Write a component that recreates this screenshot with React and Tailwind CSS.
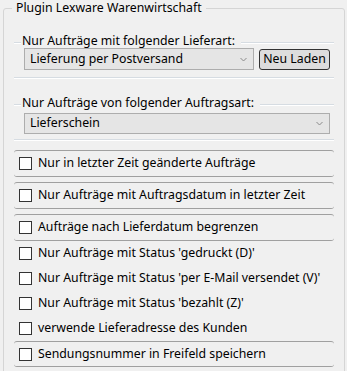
import React from "react";

function Chevron() {
  return (
    <svg width="7" height="5" viewBox="0 0 7 5" className="shrink-0">
      <path d="M0.5 1 L3.5 4 L6.5 1" fill="none" stroke="#8a8a8a" strokeWidth="1" />
    </svg>
  );
}

function Etched({ className = "" }) {
  return (
    <div className={"flex flex-col " + className}>
      <div className="h-[1px] bg-[#d6dce2]" />
      <div className="h-[1px] bg-white" />
    </div>
  );
}

function Header({ text, className = "" }) {
  return (
    <div className={"flex h-[14px] items-start " + className}>
      <Etched className="mt-[8px] w-[7px]" />
      <span className="ml-[1px] mr-[6px] whitespace-nowrap leading-[14px]">{text}</span>
      <Etched className="mt-[8px] flex-1" />
    </div>
  );
}

function Combo({ text, className = "" }) {
  return (
    <div className={"flex items-center justify-between border border-[#adadad] bg-[#e5e5e5] pl-[5px] pr-[6px] " + className}>
      <span className="whitespace-nowrap leading-none">{text}</span>
      <Chevron />
    </div>
  );
}

function Check({ label }) {
  return (
    <div className="flex items-center gap-[6px] pl-[5px]">
      <div className="h-[13px] w-[13px] shrink-0 border border-[#333333] bg-white" />
      <span className="whitespace-nowrap leading-none">{label}</span>
    </div>
  );
}

function CheckGroup({ label, className = "" }) {
  return (
    <div className={"flex items-center rounded-[3px] border-y border-[#a0a0a0] " + className}>
      <Check label={label} />
    </div>
  );
}

export default function App() {
  return (
    <div
      className="relative h-[371px] w-[347px] overflow-hidden bg-[#f0f0f0] text-[12.3px] text-black"
      style={{ fontFamily: '"Noto Sans", "Open Sans", sans-serif' }}
    >
      <fieldset className="ml-[3px] h-[400px] w-[342px] rounded-[3px] border border-[#d5d5d5]">
        <legend className="ml-[8px] px-[4px] leading-[16px]">Plugin Lexware Warenwirtschaft</legend>
        <div className="flex flex-col px-[10px]">
          <Header text="Nur Aufträge mit folgender Lieferart:" className="mt-[18px]" />
          <div className="ml-[10px] flex items-start">
            <Combo text="Lieferung per Postversand" className="h-[22px] w-[230px]" />
            <button className="ml-[5px] mt-[1px] flex h-[21px] w-[71px] items-center justify-center rounded-[3px] border border-[#333333] bg-[#dddddd] leading-none">
              Neu Laden
            </button>
          </div>
          <Etched className="mt-[7px]" />
          <Header text="Nur Aufträge von folgender Auftragsart:" className="mt-[17px]" />
          <Combo text="Lieferschein" className="ml-[10px] mt-[3px] h-[21px] w-[306px]" />
          <Etched className="mt-[5px]" />
          <CheckGroup label="Nur in letzter Zeit geänderte Aufträge" className="mt-[9px] h-[27px]" />
          <CheckGroup label="Nur Aufträge mit Auftragsdatum in letzter Zeit" className="mt-[5px] h-[27px]" />
          <CheckGroup label="Aufträge nach Lieferdatum begrenzen" className="mt-[5px] h-[27px]" />
          <div className="flex h-[25px] items-center">
            <Check label="Nur Aufträge mit Status 'gedruckt (D)'" />
          </div>
          <div className="flex h-[25px] items-center">
            <Check label="Nur Aufträge mit Status 'per E-Mail versendet (V)'" />
          </div>
          <div className="flex h-[25px] items-center">
            <Check label="Nur Aufträge mit Status 'bezahlt (Z)'" />
          </div>
          <div className="flex h-[25px] items-center">
            <Check label="verwende Lieferadresse des Kunden" />
          </div>
          <CheckGroup label="Sendungsnummer in Freifeld speichern" className="h-[26px]" />
        </div>
      </fieldset>
    </div>
  );
}
